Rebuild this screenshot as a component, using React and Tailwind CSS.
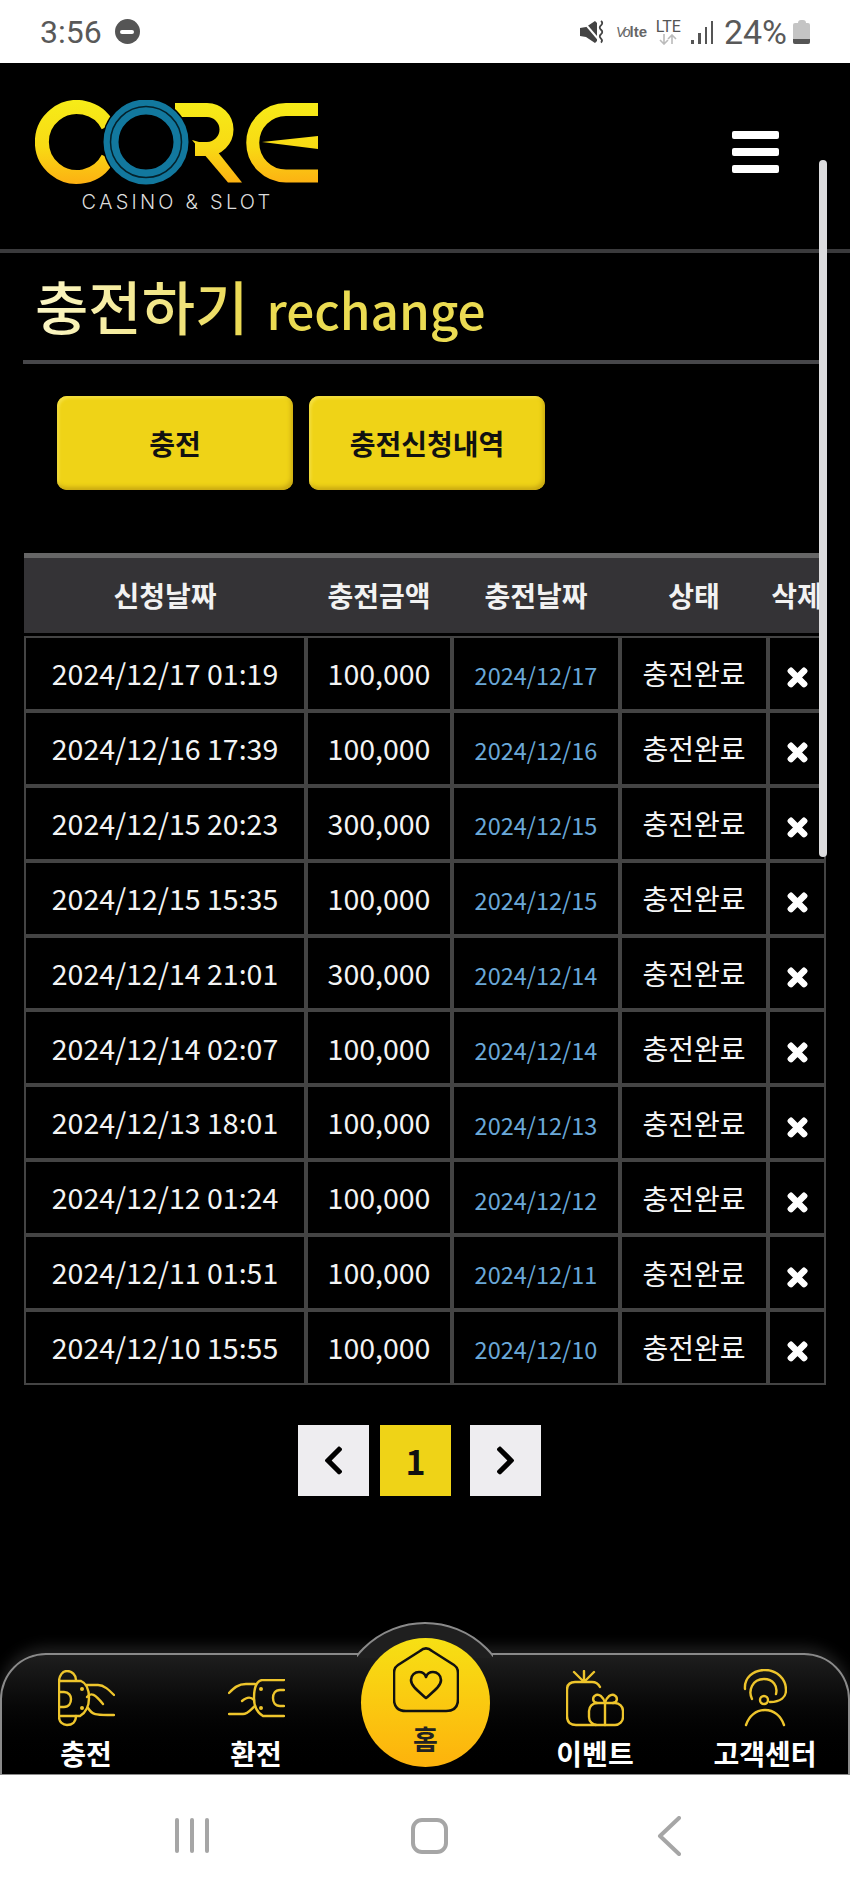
import { FaChevronLeft, FaChevronRight, FaTimes } from 'react-icons/fa';

const rows = [
  ['2024/12/17 01:19', '100,000', '2024/12/17'],
  ['2024/12/16 17:39', '100,000', '2024/12/16'],
  ['2024/12/15 20:23', '300,000', '2024/12/15'],
  ['2024/12/15 15:35', '100,000', '2024/12/15'],
  ['2024/12/14 21:01', '300,000', '2024/12/14'],
  ['2024/12/14 02:07', '100,000', '2024/12/14'],
  ['2024/12/13 18:01', '100,000', '2024/12/13'],
  ['2024/12/12 01:24', '100,000', '2024/12/12'],
  ['2024/12/11 01:51', '100,000', '2024/12/11'],
  ['2024/12/10 15:55', '100,000', '2024/12/10'],
];

function Logo() {
  return (
    <svg width="285" height="86" viewBox="0 0 285 86" fill="none">
      <defs>
        <linearGradient id="logoGold" gradientUnits="userSpaceOnUse" x1="0" y1="0" x2="0" y2="86">
          <stop offset="0" stopColor="#f6ec18" />
          <stop offset="0.55" stopColor="#f8da14" />
          <stop offset="1" stopColor="#fdae12" />
        </linearGradient>
      </defs>
      <path d="M73 26 A35 35 0 1 0 73 58" stroke="url(#logoGold)" strokeWidth="14" />
      <path d="M140 10 H172 A19.5 19.5 0 0 1 172 49 H160" stroke="url(#logoGold)" strokeWidth="14" />
      <polygon points="157,40 178,46 207,82.5 193,82.5" fill="url(#logoGold)" />
      <circle cx="111" cy="42" r="44" fill="#000" />
      <circle cx="111" cy="42" r="35" stroke="#12789e" strokeWidth="15" />
      <circle cx="111" cy="42" r="35.5" stroke="#04222c" strokeWidth="1.5" />
      <path d="M283 9.5 H251 A33.25 33.25 0 0 0 251 76 H283" stroke="url(#logoGold)" strokeWidth="13" />
      <polygon points="227,42 283,36 283,49" fill="url(#logoGold)" />
    </svg>
  );
}

function StatusBar() {
  return (
    <div className="h-[63px] bg-white flex items-center text-[#595959] font-['Roboto',sans-serif]">
      <span className="ml-[40px] text-[32px] leading-none">3:56</span>
      <span className="ml-[13px] w-[25px] h-[25px] rounded-full bg-[#555] flex items-center justify-center">
        <span className="w-[14px] h-[4px] rounded-sm bg-white" />
      </span>
      <div className="ml-auto mr-[40px] flex items-center">
        <svg width="24" height="24" viewBox="0 0 24 24" fill="#444">
          <path d="M0 8 L6 7 L15 1 L17 3 V21 L15 23 L6 17 L0 16 Z" />
          <path d="M2 0 L19 20" fill="none" stroke="#fff" strokeWidth="2" />
          <path d="M21 1 q2.5 2 0 4.400 q-2.500 2 0 4.400 q2.500 2 0 4.400 q-2.500 2 0 4.400 q2 2 0 4" fill="none" stroke="#444" strokeWidth="1.8" />
        </svg>
        <span className="ml-[12px] w-[32px] flex items-end leading-none font-['Liberation_Sans',sans-serif] text-[#666]">
          <span className="text-[14px] italic tracking-[-2px]">Vo</span>
          <span className="ml-[1px] text-[15px] font-bold">lte</span>
        </span>
        <div className="ml-[8px] w-[25px] flex flex-col items-center">
          <span className="text-[16px] leading-[15px] text-[#555]">LTE</span>
          <svg width="20" height="11" viewBox="0 0 20 11" fill="none" stroke="#bbb" strokeWidth="1.6">
            <path d="M6 0 V10 M2 6 L6 10 L10 6" />
            <path d="M14 10 V1 M10 5 L14 1 L18 5" />
          </svg>
        </div>
        <div className="ml-[10px] h-[24px] flex items-end gap-[4px]">
          <span className="w-[3px] h-[4px] bg-[#555]" />
          <span className="w-[3px] h-[11px] bg-[#555]" />
          <span className="w-[2px] h-[17px] bg-[#555]" />
          <span className="w-[2px] h-[23px] bg-[#555]" />
        </div>
        <span className="ml-[11px] text-[34px] leading-none">24%</span>
        <div className="ml-[6px] flex flex-col items-center">
          <span className="w-[8px] h-[3px] bg-[#c4c4c4] rounded-t-sm" />
          <div className="w-[17px] h-[21px] rounded-[2px] bg-[#c4c4c4] flex flex-col justify-end overflow-hidden">
            <span className="h-[5px] bg-[#555]" />
          </div>
        </div>
      </div>
    </div>
  );
}

function Header() {
  return (
    <div className="h-[190px] pl-[35px] pt-[37px] flex border-b-[4px] border-[#3a3a3c]">
      <div className="w-[285px] flex flex-col items-center">
        <Logo />
        <div className="mt-[5px] text-[20px] leading-[22px] tracking-[3.2px] text-[#dcdcdc] font-['Inter',sans-serif] font-light">CASINO &amp; SLOT</div>
      </div>
      <div className="ml-auto mr-[71px] mt-[31px] w-[47px] flex flex-col gap-[9px]">
        <span className="h-[8px] rounded-[2px] bg-white" />
        <span className="h-[8px] rounded-[2px] bg-white" />
        <span className="h-[8px] rounded-[2px] bg-white" />
      </div>
    </div>
  );
}

function Title() {
  return (
    <div className="mx-[23px] w-[797px] h-[111px] border-b-[4px] border-[#47474a] pl-[12px] flex items-center">
      <h1 className="flex items-baseline text-[58px] leading-[70px] font-medium whitespace-nowrap">
        <span className="text-transparent bg-clip-text bg-gradient-to-r from-[#fcf7c8] to-[#ebd94e]">충전하기</span>
        <span className="ml-[18px] text-[49.5px] text-[#ebdb52]">rechange</span>
      </h1>
    </div>
  );
}

function TabButton({ children }) {
  return (
    <button className="w-[236px] h-[94px] rounded-[10px] bg-[#efd317] text-[28px] font-bold text-[#111] shadow-[inset_-2px_-3px_4px_#c9a912,inset_2px_2px_3px_#f6e246]">
      {children}
    </button>
  );
}

function HistoryTable() {
  return (
    <table className="ml-[24px] mt-[63px] w-[802px] table-fixed border-separate border-spacing-0">
      <colgroup>
        <col className="w-[282px]" />
        <col className="w-[146px]" />
        <col className="w-[168px]" />
        <col className="w-[148px]" />
        <col className="w-[58px]" />
      </colgroup>
      <thead>
        <tr className="text-[28px] text-[#f2f2f2]">
          {['신청날짜', '충전금액', '충전날짜', '상태', '삭제'].map((h) => (
            <th key={h} className="h-[83px] p-0 pb-[2px] font-bold whitespace-nowrap bg-[#343336] bg-clip-padding border-t-[5px] border-t-[#666] border-b-[3px] border-b-black">{h}</th>
          ))}
        </tr>
      </thead>
      <tbody>
        {rows.map((r, i) => (
          <tr key={i} className="h-[74.9px] text-center text-[28.5px] text-[#f4f4f4]">
            <td className="p-0 border-2 border-[#444]">{r[0]}</td>
            <td className="p-0 border-2 border-[#444]">{r[1]}</td>
            <td className="p-0 pt-[5px] border-2 border-[#444] text-[23.5px] text-[#6aa8d8]">{r[2]}</td>
            <td className="p-0 text-[28px] border-2 border-[#444]">충전완료</td>
            <td className="p-0 pt-[9px] border-2 border-[#444]">
              <FaTimes size={27} stroke="currentColor" strokeWidth={30} className="mx-auto text-white" />
            </td>
          </tr>
        ))}
      </tbody>
    </table>
  );
}

function Pagination() {
  return (
    <div className="ml-[298px] mt-[40px] flex">
      <button className="w-[71px] h-[71px] bg-[#eeedf0] flex items-center justify-center text-black">
        <FaChevronLeft size={33} />
      </button>
      <button className="ml-[11px] w-[71px] h-[71px] bg-[#efd317] text-[34px] font-bold text-[#111]">1</button>
      <button className="ml-[19px] w-[71px] h-[71px] bg-[#eeedf0] flex items-center justify-center text-black">
        <FaChevronRight size={33} />
      </button>
    </div>
  );
}

function ChargeIcon() {
  return (
    <svg width="57" height="57" viewBox="0 0 57 57" fill="none" stroke="#eec52c" strokeWidth="2.4" strokeLinecap="round">
      <path d="M1 12 V47 C1 52 5 55 9 55 C14 55 18 52 18 46" />
      <path d="M1 12 C1 5 5 1 9 1 C14 1 18 5 18 10" />
      <path d="M1 11 H23 C28 13 31 19 31 28 C31 37 27 43 22 46 H1" />
      <path d="M1 22 H6 C11 22 13 26 13 29 C13 33 11 37 6 37 H1" />
      <path d="M28 15 H40 C46 15 51 20 56 25" />
      <path d="M29 27 C33 22 37 24 45 34" />
      <path d="M30 38 C35 46 39 45 56 45" />
      <circle cx="24" cy="19" r="2" fill="#eec52c" stroke="none" />
      <circle cx="24" cy="38" r="2" fill="#eec52c" stroke="none" />
    </svg>
  );
}

function ExchangeIcon() {
  return (
    <svg width="57" height="39" viewBox="0 0 57 39" fill="none" stroke="#eec52c" strokeWidth="2.4" strokeLinecap="round">
      <path d="M56 1 H34 C29 2 26 8 26 19 C26 28 30 34 35 37 H56" />
      <path d="M56 11 H52 C47 11 45 15 45 19 C45 23 47 27 52 27 H56" />
      <path d="M1 14 C6 9 10 5 18 5 H27" />
      <path d="M14 22 C20 17 23 18 26 21" />
      <path d="M1 35 H15 C20 35 23 30 27 27" />
      <circle cx="33" cy="10" r="2" fill="#eec52c" stroke="none" />
      <circle cx="33" cy="29" r="2" fill="#eec52c" stroke="none" />
    </svg>
  );
}

function GiftIcon() {
  return (
    <svg width="58" height="57" viewBox="0 0 58 57" fill="none" stroke="#eec52c" strokeWidth="2.4" strokeLinecap="round" strokeLinejoin="round">
      <path d="M8 2 L17 11 M18 1 V11 M28 2 L19 11" />
      <path d="M34 17 C32 13 29 12 26 12 H9 C4 12 1 15 1 20 V46 C1 52 4 55 10 55 H30" />
      <rect x="23" y="33" width="34" height="22" rx="8" />
      <path d="M39 33 V55" />
      <path d="M39 33 C37 26 33 24 30 25 C26 27 26 32 31 33" />
      <path d="M39 33 C41 26 45 24 48 25 C52 27 52 32 47 33" />
    </svg>
  );
}

function SupportIcon() {
  return (
    <svg width="44" height="58" viewBox="0 0 44 58" fill="none" stroke="#eec52c" strokeWidth="2.4" strokeLinecap="round">
      <path d="M2 20 C1 9 10 1 22 1 C34 1 43 10 43 21 C43 28 38 33 27 33" />
      <path d="M9 30 C5 22 9 10 21 10 C30 10 35 17 33 25" />
      <circle cx="21" cy="31" r="4" />
      <path d="M3 56 C6 47 13 41 22 41 C31 41 38 47 41 56" />
    </svg>
  );
}

function NavItem({ className, icon, label }) {
  return (
    <div className={`flex flex-col items-center ${className}`}>
      <div className="h-[58px] flex items-center">{icon}</div>
      <span className="mt-[9px] text-[28px] leading-[34px] font-bold text-white whitespace-nowrap">{label}</span>
    </div>
  );
}

function BottomNav() {
  return (
    <div className="relative h-[122px] rounded-t-[46px] border-2 border-b-[1px] border-[#8a8a8a] bg-gradient-to-b from-[#1e1e1e] to-black pt-[14px] flex shadow-[0_-6px_14px_rgba(70,70,70,0.45)]">
      {/* bump behind the home button */}
      <div className="absolute left-[355px] -top-[33px] w-[136px] h-[36px] overflow-hidden">
        <div className="ml-[-20px] w-[176px] h-[176px] rounded-full border-2 border-[#8a8a8a] bg-[#1f1f1f]" />
      </div>
      <div className="absolute left-[359px] -top-[17px] w-[129px] h-[129px] rounded-full bg-gradient-to-b from-[#f6e014] to-[#fdb20c] flex flex-col items-center">
        <svg className="mt-[9px]" width="66" height="66" viewBox="0 0 66 66" fill="none" stroke="#111" strokeWidth="2.6" strokeLinejoin="round">
          <path d="M27 4 C31 0.5 35 0.5 39 4 L61 18 C64 20 65 22 65 26 V52 C65 60 61 64 53 64 H13 C5 64 1 60 1 52 V26 C1 22 2 20 5 18 Z" />
          <path d="M33 51 C25 44 18 39 18 33 C18 28 22 25 26 25 C29 25 32 27 33 30 C34 27 37 25 40 25 C44 25 48 28 48 33 C48 39 41 44 33 51 Z" />
        </svg>
        <span className="mt-[10px] text-[27px] leading-[32px] font-bold text-[#222]">홈</span>
      </div>
      <NavItem className="ml-[57px] w-[54px]" icon={<ChargeIcon />} label="충전" />
      <NavItem className="ml-[114px] w-[58px]" icon={<ExchangeIcon />} label="환전" />
      <NavItem className="ml-[272px] w-[76px]" icon={<GiftIcon />} label="이벤트" />
      <NavItem className="ml-[80px] w-[104px]" icon={<SupportIcon />} label="고객센터" />
    </div>
  );
}

function SystemNav() {
  return (
    <div className="h-[114px] bg-white flex items-center relative">
      <div className="ml-[175px] flex gap-[11px] mt-[7px]">
        <span className="w-[4px] h-[35px] rounded-sm bg-[#a6a6a6]" />
        <span className="w-[4px] h-[35px] rounded-sm bg-[#a6a6a6]" />
        <span className="w-[4px] h-[35px] rounded-sm bg-[#a6a6a6]" />
      </div>
      <span className="ml-[202px] mt-[7px] w-[37px] h-[36px] rounded-[11px] border-[4px] border-[#a6a6a6]" />
      <svg className="ml-[209px] mt-[7px]" width="24" height="40" viewBox="0 0 24 40" fill="none" stroke="#a6a6a6" strokeWidth="4" strokeLinecap="round" strokeLinejoin="round">
        <path d="M22 2 L3 20 L22 38" />
      </svg>
    </div>
  );
}

export default function App() {
  return (
    <div className="relative w-[850px] h-[1889px] overflow-hidden bg-black flex flex-col font-['Noto_Sans_CJK_KR',sans-serif]">
      <StatusBar />
      <Header />
      <div className="flex-1">
        <Title />
        <div className="mt-[32px] ml-[57px] flex gap-[16px]">
          <TabButton>충전</TabButton>
          <TabButton>충전신청내역</TabButton>
        </div>
        <HistoryTable />
        <Pagination />
      </div>
      <BottomNav />
      <SystemNav />
      {/* page scrollbar overlay */}
      <div className="absolute left-[819px] top-[160px] w-[8px] h-[697px] rounded-full bg-[#dcdcde]" />
    </div>
  );
}
